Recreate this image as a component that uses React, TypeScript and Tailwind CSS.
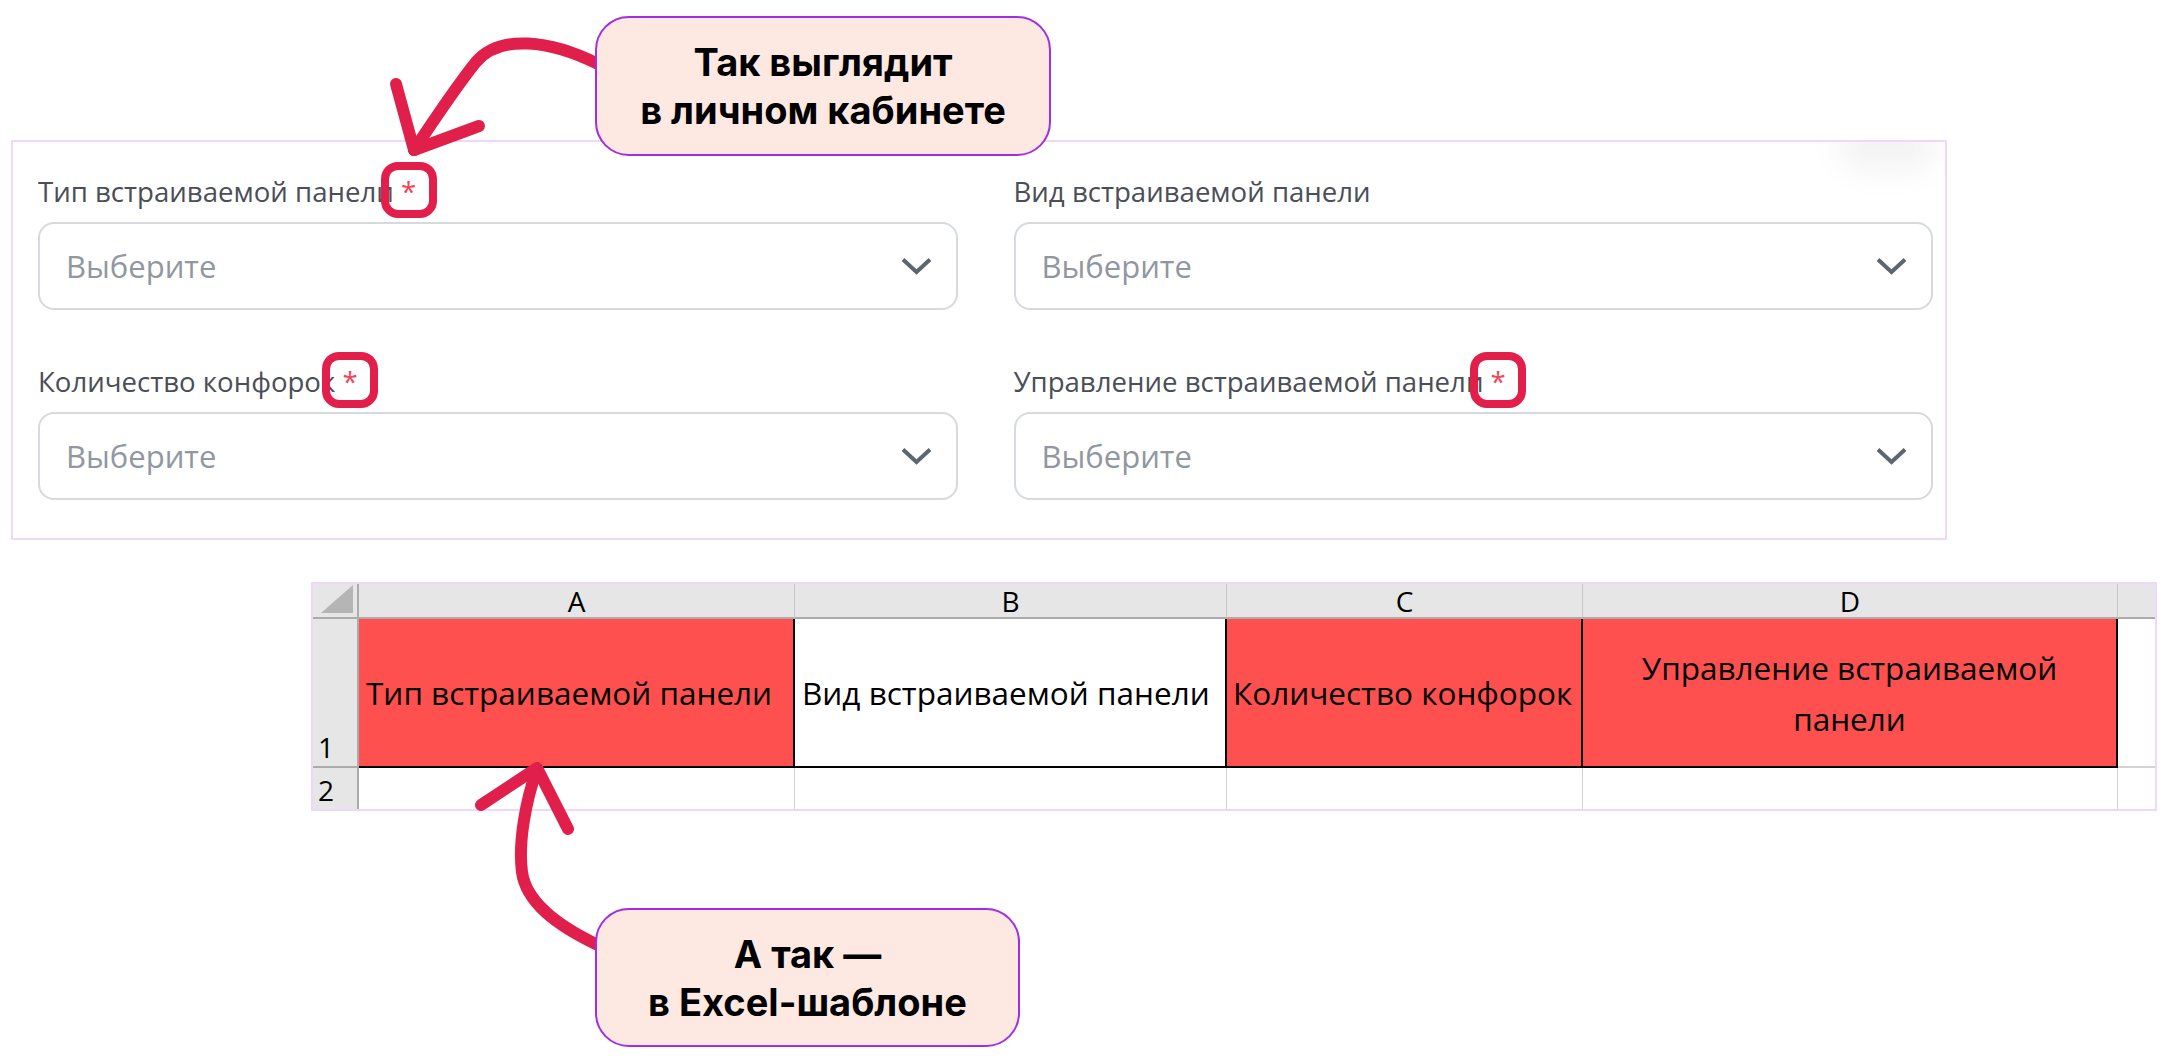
import React from 'react';

const Chevron = () => (
  <svg width="31" height="18" viewBox="0 0 31 18" fill="none">
    <path d="M2 2.5 L15.5 15 L29 2.5" stroke="#5b6670" strokeWidth="4" strokeLinejoin="miter" />
  </svg>
);

const Field = ({ label, required }: { label: string; required?: boolean }) => (
  <div className="flex flex-col">
    <div className="text-[27.6px] leading-[36px] text-[#4a4e57] mb-[13px] whitespace-nowrap">
      {label}
      {required && (
        <>
          {' '}
          <span className="relative text-[#f0445a]">
            *
            <span className="absolute left-1/2 top-1/2 -translate-x-1/2 -translate-y-[52%] w-[56px] h-[56px] rounded-[17px] border-[8px] border-[#e21e4b]" />
          </span>
        </>
      )}
    </div>
    <div className="h-[88px] border-2 border-[#d6dade] rounded-[16px] flex items-center justify-between pl-[26px] pr-[24px] bg-white">
      <span className="text-[31px] text-[#9097a0]">Выберите</span>
      <Chevron />
    </div>
  </div>
);

const hdr = 'bg-[#e6e6e6] border-r border-[#c6c6c6] border-b-2 border-b-[#ababab] flex items-center justify-center text-[28px] text-black';

const Callout = ({ lines, className }: { lines: string[]; className: string }) => (
  <div
    className={`absolute rounded-[34px] border-2 border-[#a22ee2] bg-[#fde9e1] flex flex-col items-center justify-center text-[38px] leading-[48px] font-bold text-black ${className}`}
    style={{ fontFamily: 'Inter, "Liberation Sans", sans-serif' }}
  >
    {lines.map((l) => (
      <div key={l}>{l}</div>
    ))}
  </div>
);

export default function App() {
  return (
    <div
      className="relative w-[2171px] h-[1061px] bg-white overflow-hidden"
      style={{ fontFamily: '"Open Sans", "Noto Sans", sans-serif' }}
    >
      {/* форма из личного кабинета */}
      <div className="relative ml-[11px] mt-[140px] w-[1936px] border-2 border-[#eed6fc] overflow-hidden pt-[31px] pb-[38px] pl-[25px] pr-[12px]">
        <div className="absolute right-[8px] -top-[26px] w-[100px] h-[56px] rounded-full bg-black/[0.045] blur-[14px]" />
        <div className="relative grid grid-cols-2 gap-x-[56px] gap-y-[53px]">
          <Field label="Тип встраиваемой панели" required />
          <Field label="Вид встраиваемой панели" />
          <Field label="Количество конфорок" required />
          <Field label="Управление встраиваемой панели" required />
        </div>
      </div>

      {/* excel-шаблон */}
      <div className="ml-[311px] mt-[42px] w-[1846px] border-2 border-[#eed6fc]">
        <div className="grid grid-cols-[46px_436px_432px_356px_535px_37px] grid-rows-[35px_149px_41px] text-[31.5px] text-black">
          <div className="bg-[#e6e6e6] border-r-2 border-b-2 border-[#ababab] flex items-end justify-end pr-[4px] pb-[4px]">
            <svg width="32" height="28" viewBox="0 0 32 28">
              <polygon points="32,0 32,28 0,28" fill="#b5b5b5" />
            </svg>
          </div>
          <div className={hdr}>A</div>
          <div className={hdr}>B</div>
          <div className={hdr}>C</div>
          <div className={hdr}>D</div>
          <div className={hdr + ' border-r-0'} />

          <div className="bg-[#e6e6e6] border-r-2 border-b-2 border-[#ababab] flex items-end pl-[5px] text-[28px] leading-[38px]">1</div>
          <div className="bg-[#ff5050] border-r-2 border-b-2 border-black flex items-center pl-[7px] whitespace-nowrap">Тип встраиваемой панели</div>
          <div className="bg-white border-r-2 border-b-2 border-black flex items-center pl-[7px] whitespace-nowrap">Вид встраиваемой панели</div>
          <div className="bg-[#ff5050] border-r-2 border-b-2 border-black flex items-center pl-[6px] whitespace-nowrap">Количество конфорок</div>
          <div className="bg-[#ff5050] border-r-2 border-b-2 border-black flex items-center justify-center text-center leading-[51px] px-[8px]">
            <span className="max-w-[450px]">Управление встраиваемой панели</span>
          </div>
          <div className="bg-white border-b-2 border-[#d4d4d4]" />

          <div className="bg-[#e6e6e6] border-r-2 border-[#ababab] flex items-end pl-[5px] text-[28px] leading-[38px]">2</div>
          <div className="border-r border-[#d4d4d4]" />
          <div className="border-r border-[#d4d4d4]" />
          <div className="border-r border-[#d4d4d4]" />
          <div className="border-r border-[#d4d4d4]" />
          <div />
        </div>
      </div>

      {/* подписи-выноски */}
      <svg className="absolute inset-0 pointer-events-none" width="2171" height="1061" fill="none">
        <g stroke="#e11f4b" strokeWidth="12" strokeLinecap="round" strokeLinejoin="round">
          <path d="M598 64 C550 40 500 34 476 62 C455 88 430 126 414 150" />
          <path d="M396 84 L414 150 L479 126" />
          <path d="M598 945 C556 925 526 902 522 872 C518 842 526 800 537 769" />
          <path d="M481 805 L537 768 L568 829" />
        </g>
      </svg>
      <Callout lines={['Так выглядит', 'в личном кабинете']} className="left-[595px] top-[16px] w-[456px] h-[140px]" />
      <Callout lines={['А так —', 'в Excel-шаблоне']} className="left-[595px] top-[908px] w-[425px] h-[139px]" />
    </div>
  );
}
